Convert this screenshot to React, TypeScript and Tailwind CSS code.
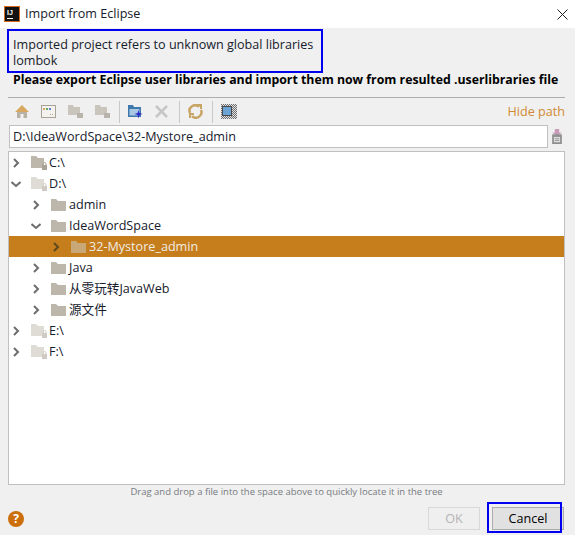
const font = "font-['Open_Sans','Noto_Sans_CJK_SC',sans-serif]";

function Chevron({ open, dark }: { open?: boolean; dark?: boolean }) {
  const color = dark ? "#5e4a1e" : "#6e6e6e";
  return (
    <svg width="10" height="10" viewBox="0 0 10 10" fill="none" stroke={color} strokeWidth="2" className="shrink-0">
      {open ? <path d="M0.5 3 L5 7 L9.5 3" /> : <path d="M3 1 L7 5 L3 9" />}
    </svg>
  );
}

function Folder({ color = "#bdb7ab" }: { color?: string }) {
  return (
    <svg width="15" height="12" viewBox="0 0 15 12" className="shrink-0">
      <path d="M0 0 H5 L7 2 H15 V12 H0 Z" fill={color} />
    </svg>
  );
}

function Drive({ light }: { light?: boolean }) {
  return (
    <svg width="16" height="14" viewBox="0 0 16 14" className="shrink-0">
      <path d="M0 0 H5 L7 2 H13 V12 H0 Z" fill={light ? "#dfdcd6" : "#bdb7ab"} />
      <rect x="11" y="9" width="5" height="5" fill={light ? "#cfcbc4" : "#a8a296"} />
      <path d="M12 9.5 V8 a1.5 1.5 0 0 1 3 0 V9.5" fill="none" stroke={light ? "#cfcbc4" : "#a8a296"} />
    </svg>
  );
}

type Row = { label: string; depth: number; open?: boolean; selected?: boolean; drive?: boolean; light?: boolean };

const rows: Row[] = [
  { label: "C:\\", depth: 0, drive: true },
  { label: "D:\\", depth: 0, drive: true, light: true, open: true },
  { label: "admin", depth: 1 },
  { label: "IdeaWordSpace", depth: 1, open: true },
  { label: "32-Mystore_admin", depth: 2, selected: true },
  { label: "Java", depth: 1 },
  { label: "从零玩转JavaWeb", depth: 1 },
  { label: "源文件", depth: 1 },
  { label: "E:\\", depth: 0, drive: true, light: true },
  { label: "F:\\", depth: 0, drive: true, light: true },
];

const indent = ["pl-[2px]", "pl-[22px]", "pl-[42px]"];

function TreeRow({ row }: { row: Row }) {
  return (
    <div
      className={`flex h-[21px] items-center ${indent[row.depth]} ${
        row.selected ? "bg-[#c67d1c] text-[#f0ece4]" : "text-[#16202c]"
      }`}
    >
      <span className="flex w-[20px] shrink-0">
        <Chevron open={row.open} dark={row.selected} />
      </span>
      <span className="flex w-[18px] shrink-0">
        {row.drive ? <Drive light={row.light} /> : <Folder color={row.selected ? "#c9a877" : "#bdb7ab"} />}
      </span>
      <span className="whitespace-nowrap">{row.label}</span>
    </div>
  );
}

function Toolbar() {
  return (
    <div className="flex h-[27px] items-center pl-[6px]">
      {/* home */}
      <svg width="16" height="16" viewBox="0 0 16 16" className="mr-[11px]">
        <path d="M8 1 L15 8 H13 V14 H3 V8 H1 Z" fill="#d8a860" />
        <path d="M3 8 H13 V14 H3 Z" fill="#b8b2a6" />
        <rect x="6.5" y="10" width="3" height="4" fill="#f0f0f0" />
      </svg>
      {/* window */}
      <svg width="15" height="13" viewBox="0 0 15 13" className="mr-[12px]">
        <rect x="0.5" y="0.5" width="14" height="12" fill="#f4f2ee" stroke="#a9a397" />
        <rect x="2" y="3" width="2" height="2" fill="#d8a860" />
        <rect x="5" y="3" width="2" height="2" fill="#6aa86a" />
        <rect x="8" y="3" width="2" height="2" fill="#5a88c8" />
        <path d="M9 9.5 H13" stroke="#a9a397" strokeDasharray="1 1" />
      </svg>
      {/* folder up */}
      <svg width="15" height="15" viewBox="0 0 15 15" className="mr-[12px]">
        <path d="M0 1 H5 L6 3 H12 V11 H0 Z" fill="#c9c5bd" />
        <rect x="9" y="9" width="6" height="5" fill="#b8b4ac" />
      </svg>
      <svg width="15" height="15" viewBox="0 0 15 15" className="mr-[9px]">
        <path d="M0 1 H5 L6 3 H12 V11 H0 Z" fill="#c9c5bd" />
        <rect x="9" y="9" width="6" height="5" fill="#b8b4ac" />
      </svg>
      <div className="mr-[8px] h-[22px] w-px bg-[#c8c8c8]" />
      {/* new folder */}
      <svg width="15" height="15" viewBox="0 0 15 15" className="mr-[12px]">
        <path d="M0 1 H5 L6 3 H13 V13 H0 Z" fill="#3f78ad" />
        <path d="M1.5 5 H11.5 V11.5 H1.5 Z" fill="#a8c8e4" />
        <path d="M10.5 6 L11.4 9 L14.5 10 L11.4 11 L10.5 14.5 L9.6 11 L6.5 10 L9.6 9 Z" fill="#2a2ac8" />
      </svg>
      {/* delete */}
      <svg width="13" height="13" viewBox="0 0 13 13" className="mr-[11px]" stroke="#c6c6c6" strokeWidth="2.5">
        <path d="M1 1 L12 12 M12 1 L1 12" />
      </svg>
      <div className="mr-[8px] h-[22px] w-px bg-[#c8c8c8]" />
      {/* refresh */}
      <svg width="15" height="15" viewBox="0 0 15 15" fill="none" stroke="#c8a465" strokeWidth="2.5" className="mr-[9px]">
        <path d="M2 9 A5.5 5.5 0 0 1 11 3 M13 6 A5.5 5.5 0 0 1 4 12" />
        <path d="M9 1 H13 V5" strokeWidth="2" />
        <path d="M2 14 V10 H6" strokeWidth="2" />
      </svg>
      <div className="mr-[8px] h-[22px] w-px bg-[#c8c8c8]" />
      {/* preview */}
      <svg width="16" height="15" viewBox="0 0 16 15">
        <defs>
          <pattern id="dither" width="2" height="2" patternUnits="userSpaceOnUse">
            <rect width="2" height="2" fill="#e4e4e4" />
            <rect width="1" height="1" fill="#6e6e6e" />
            <rect x="1" y="1" width="1" height="1" fill="#6e6e6e" />
          </pattern>
        </defs>
        <rect width="16" height="15" fill="url(#dither)" />
        <rect x="1" y="2" width="10" height="10" fill="#4a4a4a" />
        <rect x="2" y="3" width="8" height="8" fill="#6ba4d4" />
      </svg>
      <span className="ml-auto text-[#d08a32]">Hide path</span>
    </div>
  );
}

export default function App() {
  return (
    <div className={`flex h-[535px] w-[575px] flex-col overflow-hidden bg-[#f0f0f0] text-[12.6px] leading-[16px] text-black ${font}`}>
      <div className="flex h-[28px] items-center bg-white pl-[4px] pr-[7px]">
        <div className="flex h-[16px] w-[16px] flex-col items-start justify-center border border-[#d2691e] bg-[#111] pl-[2px] font-['Liberation_Sans'] text-[7px] font-bold leading-[8px] text-white">
          <span>IJ</span>
          <span className="mt-[1px] h-px w-[6px] bg-white" />
        </div>
        <span className="ml-[5px] text-[#16202c]">Import from Eclipse</span>
        <svg width="11" height="11" viewBox="0 0 11 11" stroke="#222" strokeWidth="1" className="ml-auto">
          <path d="M0.5 0.5 L10.5 10.5 M10.5 0.5 L0.5 10.5" />
        </svg>
      </div>

      <div className="flex min-h-0 flex-1 flex-col pl-[8px] pr-[10px]">
        <div className="-ml-px mt-px h-[44px] w-[316px] whitespace-nowrap border-2 border-[#0000f0] pl-[4px] pt-[6px] text-[#16202c]">
          <div>Imported project refers to unknown global libraries</div>
          <div>lombok</div>
        </div>
        <div className="h-[24px] whitespace-nowrap pl-[5px] text-[12.3px] font-bold leading-[13px]">
          Please export Eclipse user libraries and import them now from resulted .userlibraries file
        </div>
        <div className="h-px bg-[#adadad]" />
        <Toolbar />

        <div className="flex items-center">
          <div className="ml-px flex h-[23px] w-[539px] items-center border border-[#c0c0c0] bg-white pl-[3px] text-[#16202c]">
            D:\IdeaWordSpace\32-Mystore_admin
          </div>
          <svg width="12" height="15" viewBox="0 0 13 17" className="ml-[3px]">
            <path d="M4 0 H9 V4 H12 L6.5 8 L1 4 H4 Z" fill="#c79bb8" />
            <rect x="1" y="6" width="11" height="11" fill="#8f8f8f" />
            <rect x="3" y="9" width="7" height="6" fill="#e0e0e0" />
            <path d="M4 11 H9 M4 13 H9" stroke="#8f8f8f" />
          </svg>
        </div>

        <div className="mt-[3px] h-[334px] border border-[#c0c0c0] bg-white">
          {rows.map((r) => (
            <TreeRow key={r.label} row={r} />
          ))}
        </div>

        <div className="h-[22px] text-center text-[9.5px] leading-[14px] text-[#777b80]">
          Drag and drop a file into the space above to quickly locate it in the tree
        </div>

        <div className="flex items-center">
          <div className="flex h-[16px] w-[16px] items-center justify-center rounded-full bg-[#cc6f0a] text-[12px] font-bold text-white">
            ?
          </div>
          <button className="ml-auto h-[23px] w-[52px] border border-[#d9d9d9] bg-[#efefef] text-[#b4b4b4]">OK</button>
          <button className="relative ml-[12px] mr-px h-[23px] w-[72px] border border-[#adadad] bg-[#e1e1e1]">
            Cancel
            {/* blue annotation box from the screenshot */}
            <span className="absolute -bottom-[4px] -left-[6px] -top-[6px] right-[1px] border-2 border-[#0000f0]" />
          </button>
        </div>
      </div>
    </div>
  );
}
